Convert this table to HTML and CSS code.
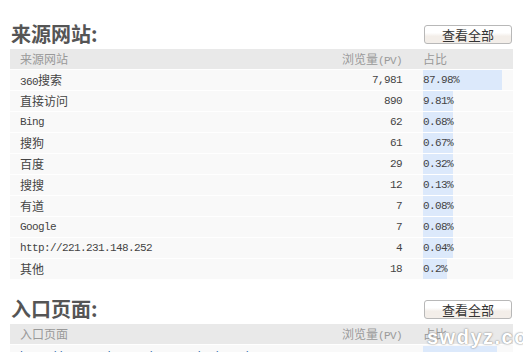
FILE: index.html
```html
<!DOCTYPE html>
<html lang="zh-CN">
<head>
<meta charset="utf-8">
<title>来源网站</title>
<link rel="stylesheet" href="styles.css">
</head>
<body>
<div class="page">
  <section class="block first">
    <div class="head">
      <h2 class="title">来源网站:</h2>
      <button class="btn">查看全部</button>
    </div>
    <table class="stats">
      <thead>
        <tr><th class="name">来源网站</th><th class="pv">浏览量<span class="en">(PV)</span></th><th class="pct">占比</th></tr>
      </thead>
      <tbody>
        <tr><td class="name"><span class="en">360</span>搜索</td><td class="pv en">7,981</td><td class="pct"><span class="bar en" style="width:87.98%">87.98%</span></td></tr>
        <tr><td class="name">直接访问</td><td class="pv en">890</td><td class="pct"><span class="bar en" style="width:9.81%">9.81%</span></td></tr>
        <tr><td class="name en">Bing</td><td class="pv en">62</td><td class="pct"><span class="bar en" style="width:0.68%">0.68%</span></td></tr>
        <tr><td class="name">搜狗</td><td class="pv en">61</td><td class="pct"><span class="bar en" style="width:0.67%">0.67%</span></td></tr>
        <tr><td class="name">百度</td><td class="pv en">29</td><td class="pct"><span class="bar en" style="width:0.32%">0.32%</span></td></tr>
        <tr><td class="name">搜搜</td><td class="pv en">12</td><td class="pct"><span class="bar en" style="width:0.13%">0.13%</span></td></tr>
        <tr><td class="name">有道</td><td class="pv en">7</td><td class="pct"><span class="bar en" style="width:0.08%">0.08%</span></td></tr>
        <tr><td class="name en">Google</td><td class="pv en">7</td><td class="pct"><span class="bar en" style="width:0.08%">0.08%</span></td></tr>
        <tr><td class="name en">http://221.231.148.252</td><td class="pv en">4</td><td class="pct"><span class="bar en" style="width:0.04%">0.04%</span></td></tr>
        <tr><td class="name">其他</td><td class="pv en">18</td><td class="pct"><span class="bar en" style="width:0.2%">0.2%</span></td></tr>
      </tbody>
    </table>
  </section>
  <section class="block second">
    <div class="head">
      <h2 class="title">入口页面:</h2>
      <button class="btn">查看全部</button>
    </div>
    <table class="stats">
      <thead>
        <tr><th class="name">入口页面</th><th class="pv">浏览量<span class="en">(PV)</span></th><th class="pct">占比</th></tr>
      </thead>
      <tbody>
        <tr class="low"><td class="name en"><a class="link" href="#">http://www.360doc.com/content/12/0818/</a></td><td class="pv en">7,405</td><td class="pct"><span class="bar en" style="width:82.28%">82.28%</span></td></tr>
      </tbody>
    </table>
  </section>
  <div class="mark">swdyz.com</div>
</div>
</body>
</html>
```

FILE: styles.css
```css
html, body {
  margin: 0;
  padding: 0;
  background: #fff;
  overflow: hidden;
}
body {
  font-family: "Noto Sans CJK SC", "Liberation Sans", sans-serif;
  font-size: 12px;
  color: #444;
}
.page {
  position: relative;
  padding: 20px 10px 0 10px;
  height: 332px;
  overflow: hidden;
}
.block.second {
  margin-top: 15px;
}
.head {
  display: flex;
  justify-content: space-between;
  align-items: flex-end;
  height: 24px;
  margin-bottom: 5px;
  padding-right: 1px;
}
.title {
  margin: 0;
  font-size: 20px;
  line-height: 20px;
  font-weight: bold;
  color: #555;
  padding-left: 1px;
}
.btn {
  width: 88px;
  height: 19px;
  padding: 0;
  border: 1px solid #b8b8b8;
  border-radius: 3px;
  background: linear-gradient(#ffffff 0%, #ffffff 40%, #f3eee9 60%, #f3eee9 100%);
  font-family: "Noto Sans CJK SC", sans-serif;
  font-size: 13px;
  line-height: 17px;
  color: #333;
}
.stats {
  width: 100%;
  border-collapse: collapse;
  table-layout: fixed;
}
.stats th, .stats td {
  height: 20px;
  padding: 0;
  line-height: 20px;
  border-bottom: 1px solid #fff;
  white-space: nowrap;
  overflow: hidden;
  text-align: left;
  font-weight: normal;
  vertical-align: middle;
}
.stats th {
  background: #e9e9e9;
  color: #999;
}
.stats td {
  background: #f9f9f9;
}
.stats .name {
  padding-left: 10px;
}
.stats .pv {
  width: 120px;
  text-align: right;
  padding-right: 21px;
}
.stats .pct {
  width: 90px;
}
.en {
  font-family: "Liberation Mono", "Noto Sans CJK SC", monospace;
  font-size: 11px;
  letter-spacing: -0.6px;
  line-height: 1;
}
.stats td.en {
  line-height: 20px;
}
.stats .low td.en {
  padding-top: 1px;
}
.bar {
  display: inline-block;
  vertical-align: top;
  height: 20px;
  line-height: 20px;
  min-width: max-content;
  background: #dce9fb;
}
.link {
  color: #1c5fa8;
  text-decoration: none;
}
.mark {
  position: absolute;
  left: 427px;
  top: 327px;
  font-family: "Liberation Sans", sans-serif;
  font-size: 20px;
  line-height: 20px;
  font-weight: bold;
  color: #fff;
  text-shadow: 0 0 1px #999, 0 0 2px rgba(110,110,110,0.8);
  letter-spacing: 1.5px;
  white-space: nowrap;
}
```
